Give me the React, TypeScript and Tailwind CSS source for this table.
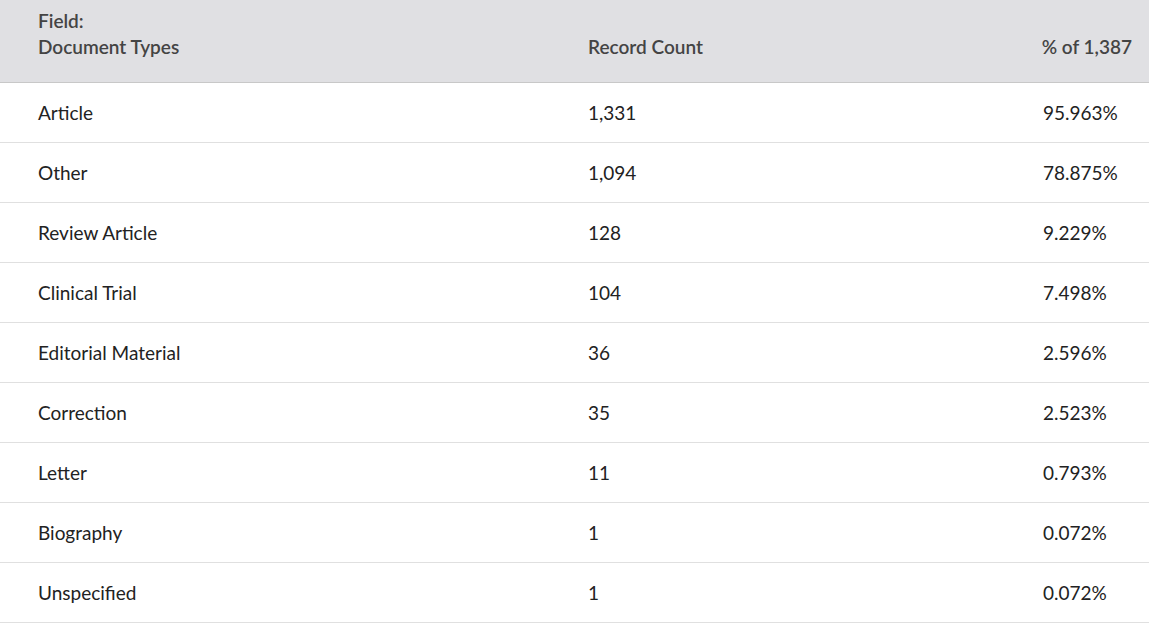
const rows = [
  { type: "Article", count: "1,331", pct: "95.963%" },
  { type: "Other", count: "1,094", pct: "78.875%" },
  { type: "Review Article", count: "128", pct: "9.229%" },
  { type: "Clinical Trial", count: "104", pct: "7.498%" },
  { type: "Editorial Material", count: "36", pct: "2.596%" },
  { type: "Correction", count: "35", pct: "2.523%" },
  { type: "Letter", count: "11", pct: "0.793%" },
  { type: "Biography", count: "1", pct: "0.072%" },
  { type: "Unspecified", count: "1", pct: "0.072%" },
];

export default function App() {
  return (
    <div className="w-[1149px] h-[624px] bg-white font-['Lato','Liberation_Sans',sans-serif] text-[19px] overflow-hidden">
      <div className="grid grid-cols-[588px_438px_1fr] h-[83px] bg-[#e0e0e3] border-b border-[#c8c8c8] text-[#444] font-semibold leading-[26px]">
        <div className="pl-[38px] pt-[8px]">
          <div>Field:</div>
          <div>Document Types</div>
        </div>
        <div className="pt-[34px]">Record Count</div>
        <div className="pt-[34px] pr-[17px] text-right">% of 1,387</div>
      </div>
      {rows.map((r) => (
        <div
          key={r.type}
          className="grid grid-cols-[588px_455px_1fr] h-[60px] items-center pt-[2px] border-b border-[#e0e0e0] text-[#222]"
        >
          <div className="pl-[38px]">{r.type}</div>
          <div>{r.count}</div>
          <div>{r.pct}</div>
        </div>
      ))}
    </div>
  );
}
